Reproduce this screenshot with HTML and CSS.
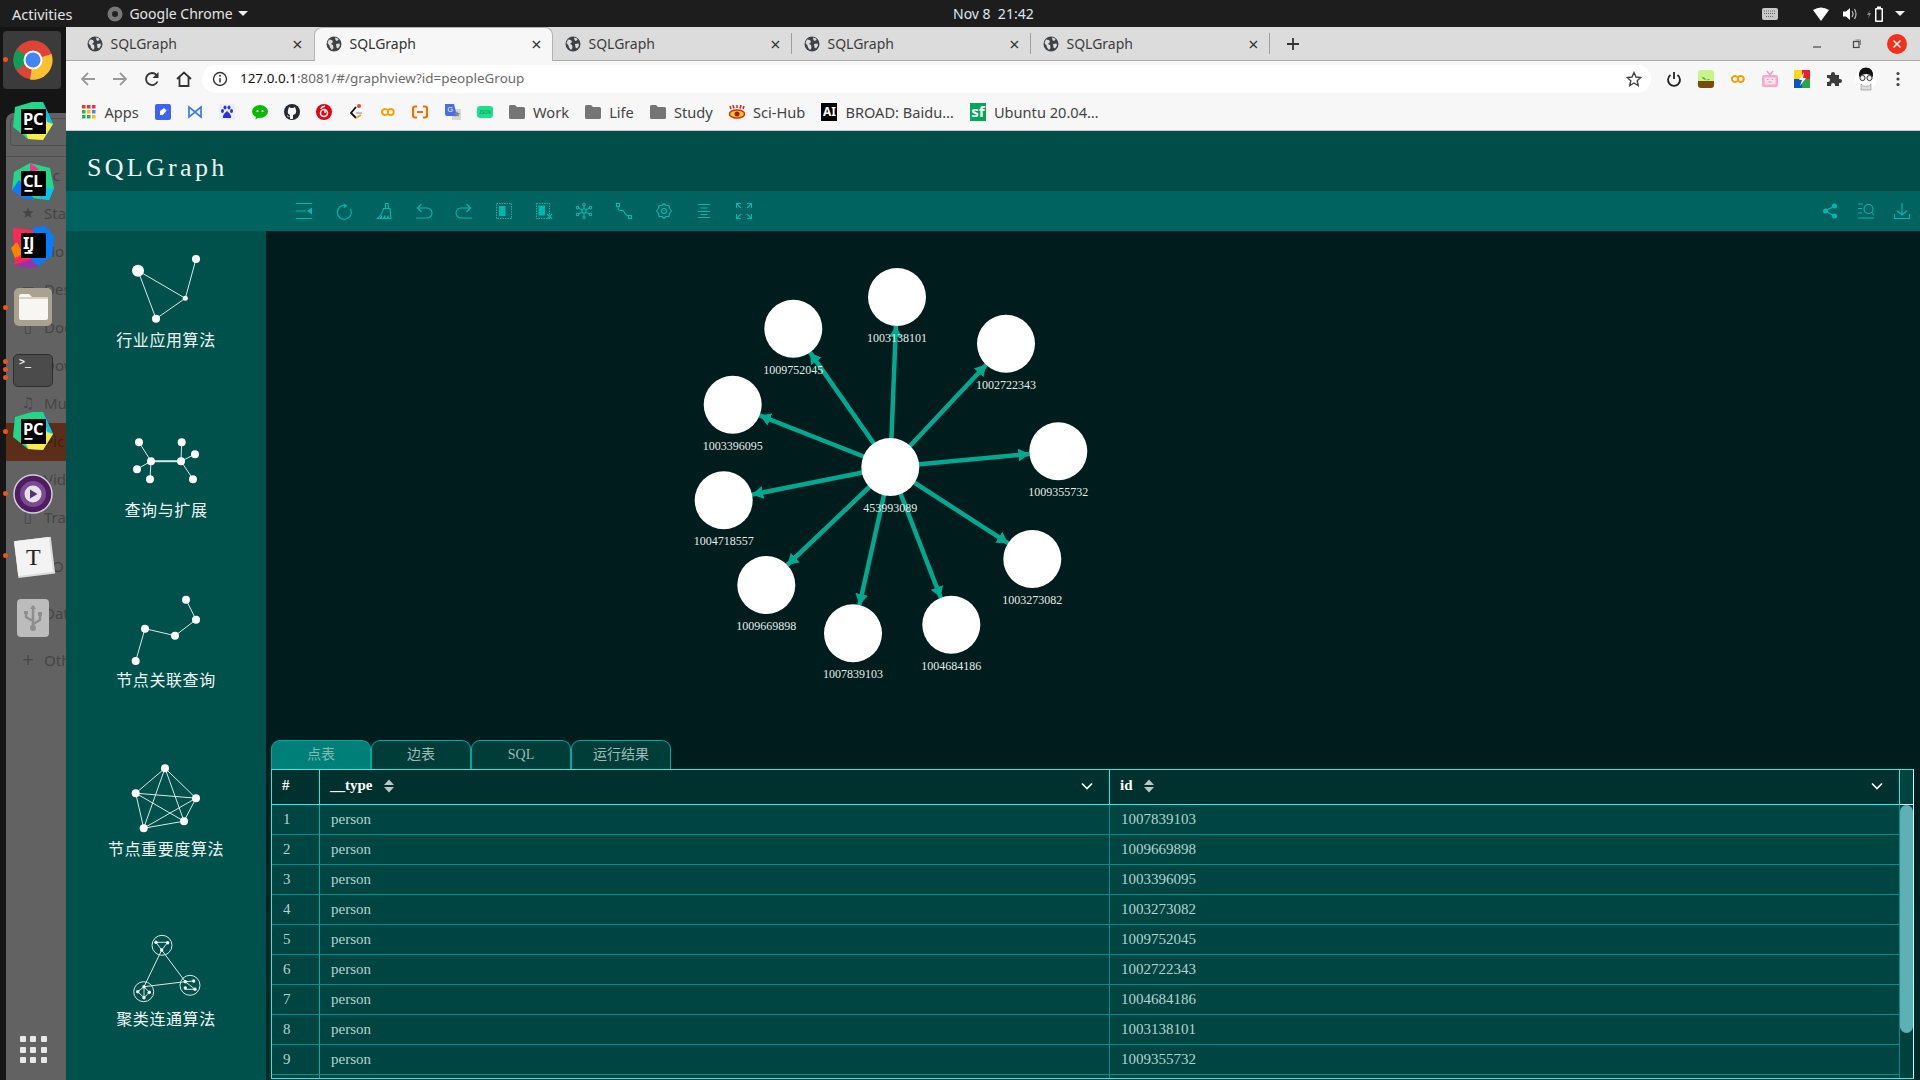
FILE: index.html
```html
<!DOCTYPE html>
<html lang="en">
<head>
<meta charset="utf-8">
<title>SQLGraph</title>
<link rel="stylesheet" href="styles.css">
</head>
<body>
<svg class="defs" width="0" height="0" aria-hidden="true">
  <symbol id="globe" viewBox="0 0 16 16">
    <circle cx="8" cy="8" r="7.5" fill="#3f4245"/>
    <path d="M3 3.5l3 .5 1 2-2 2 2 1 .5 3-1.5 2-2-2.500-.5-2L1.500 7zM9 1.500l3 1 .5 1.500-2 1-1-1zM10 8l3.500-.5.5 2-2 3-1.500-1z" fill="#dcdcdc"/>
  </symbol>
  <symbol id="jb" viewBox="0 0 48 48">
    <rect x="12" y="11" width="25" height="25" fill="#000"/>
    <rect x="15.500" y="30" width="8" height="1.800" fill="#fff"/>
  </symbol>
  <symbol id="co" viewBox="0 0 16 16">
    <circle cx="8" cy="8" r="8" fill="#fff"/>
    <path d="M7.300 6.200A3 3 0 1 0 7.300 9.800" fill="none" stroke="#ff9d00" stroke-width="2"/>
    <circle cx="10.800" cy="8" r="2.900" fill="none" stroke="#ff9d00" stroke-width="2"/>
  </symbol>
  <symbol id="folder" viewBox="0 0 16 14">
    <path d="M0 1.500A1.500 1.500 0 0 1 1.500 0H6l2 2h6.500A1.500 1.500 0 0 1 16 3.500v9a1.500 1.500 0 0 1-1.500 1.500h-13A1.500 1.500 0 0 1 0 12.500z" fill="#757575"/>
  </symbol>
</svg>

<header class="topbar">
  <div class="top-left">
    <span class="activities">Activities</span>
    <svg class="top-chrome" width="16" height="16" viewBox="0 0 16 16"><circle cx="8" cy="8" r="7.500" fill="#777"/><circle cx="8" cy="8" r="3" fill="#222"/></svg>
    <span>Google Chrome</span>
    <i class="caret"></i>
  </div>
  <span class="clock">Nov 8&nbsp;&nbsp;21:42</span>
  <div class="tray">
    <svg class="tray-kbd" width="16" height="12" viewBox="0 0 16 12"><rect width="16" height="12" rx="2" fill="#c8c8c8"/><path d="M2 3h12M2 5.500h12M4 8.500h8" stroke="#666" stroke-dasharray="1 1"/></svg>
    <svg class="tray-wifi" width="16" height="14" viewBox="0 0 16 14"><path d="M0 3Q8-2 16 3L8 14z" fill="#fff"/></svg>
    <svg class="tray-vol" width="16" height="14" viewBox="0 0 16 14"><path d="M1 4.500h3L8 1v12L4 9.500H1z" fill="#fff"/><path d="M10 4q2 3 0 6M12.500 2q3 5 0 10" stroke="#bbb" fill="none" stroke-width="1.200"/></svg>
    <svg class="tray-bat" width="18" height="18" viewBox="0 0 18 18"><path d="M3 5L0 10h2l-1 4 3-6H2z" fill="#888"/><rect x="8" y="3" width="8" height="14" rx="1" fill="#fff"/><rect x="9.500" y="4.500" width="5" height="11" fill="#1d1d1d"/><rect x="10" y="1.500" width="4" height="2" fill="#fff"/></svg>
    <i class="caret tray-caret"></i>
  </div>
</header>

<div class="desktop">
  <aside class="dock">
    <div class="ghost">
      <div class="ghost-nav"><span class="ghost-navbox"></span></div>
      <div class="ghost-row">ec</div>
      <div class="ghost-row"><b>★</b>Sta</div>
      <div class="ghost-row"><b>⌂</b>Ho</div>
      <div class="ghost-row"><b>▭</b>Des</div>
      <div class="ghost-row"><b>▯</b>Doc</div>
      <div class="ghost-row">Dow</div>
      <div class="ghost-row"><b>♫</b>Mu</div>
      <div class="ghost-row ghost-active">Pic</div>
      <div class="ghost-row"><b>▭</b>Vid</div>
      <div class="ghost-row"><b>▯</b>Tra</div>
      <div class="ghost-row ghost-wide">TO</div>
      <div class="ghost-row ghost-wide">Dat</div>
      <div class="ghost-row ghost-wide"><b>+</b>Oth</div>
    </div>
    <div class="dock-item dock-tile">
      <i class="run run-one"></i>
      <svg width="40" height="40" viewBox="0 0 40 40"><circle cx="20" cy="20" r="19.500" fill="#db4437"/><path d="M20 20L3 30A19.500 19.500 0 0 1 3.500 9.500z" fill="#0f9d58"/><path d="M20 20L38.500 14A19.500 19.500 0 0 1 17 39.500z" fill="#fbc02d"/><circle cx="20" cy="20" r="9.500" fill="#fff"/><circle cx="20" cy="20" r="7.500" fill="#4285f4"/></svg>
    </div>
    <div class="dock-item">
      <span class="jb"><svg width="48" height="48" viewBox="0 0 48 48"><path d="M6 9L23 4l11 0 10 22-10 16-15-1L4 29z" fill="#21d789"/><path d="M19 41l-3-8 18-17 10 10-10 16z" fill="#f5ea4a"/><path d="M34 4l10 22-6-2z" fill="#07c3f2"/><use href="#jb"/></svg><em>PC</em></span>
    </div>
    <div class="dock-item">
      <span class="jb"><svg width="48" height="48" viewBox="0 0 48 48"><path d="M5 12l16-9 20 5 4 20-5 12-18-2L3 30z" fill="#21d789"/><path d="M3 30l7-10 16 20-12-2z" fill="#087cfa"/><path d="M38 28l7 0-5 12-10-2z" fill="#07c3f2"/><path d="M21 3l9 6-9 4z" fill="#ff2d90"/><use href="#jb"/></svg><em>CL</em></span>
    </div>
    <div class="dock-item">
      <span class="jb"><svg width="48" height="48" viewBox="0 0 48 48"><path d="M24 6l12-2 9 10-2 20-14 10-8-6z" fill="#087cfa"/><path d="M4 6l20 2-2 30-8 2-8 4z" fill="#fe2857"/><path d="M2 26l6-6 6 12-8 4z" fill="#ff8100"/><path d="M5 43l17-6 7 7-9 2z" fill="#9b2fae"/><use href="#jb"/></svg><em>IJ</em></span>
    </div>
    <div class="dock-item">
      <i class="run run-one"></i>
      <svg width="48" height="48" viewBox="0 0 48 48"><rect x="5" y="4" width="38" height="38" rx="5" fill="#a9a291"/><path d="M10 12a2 2 0 0 1 2-2h8l3 3h14a2 2 0 0 1 2 2v19a2 2 0 0 1-2 2H12a2 2 0 0 1-2-2z" fill="#f8f6f2"/><path d="M10 14h29" stroke="#d9d3c6" stroke-width="2"/></svg>
    </div>
    <div class="dock-item">
      <i class="run run-a"></i><i class="run run-one"></i><i class="run run-c"></i>
      <span class="terminal">&gt;_</span>
    </div>
    <div class="dock-item">
      <i class="run run-one"></i>
      <span class="jb"><svg width="48" height="48" viewBox="0 0 48 48"><path d="M6 9L23 4l11 0 10 22-10 16-15-1L4 29z" fill="#21d789"/><path d="M19 41l-3-8 18-17 10 10-10 16z" fill="#f5ea4a"/><path d="M34 4l10 22-6-2z" fill="#07c3f2"/><use href="#jb"/></svg><em>PC</em></span>
    </div>
    <div class="dock-item">
      <i class="run run-one"></i>
      <svg width="40" height="40" viewBox="0 0 40 40"><circle cx="20" cy="20" r="19" fill="#4e1d60" stroke="#d6cdd9" stroke-width="1.500"/><circle cx="20" cy="20" r="13" fill="#7b4a90"/><circle cx="20" cy="20" r="8.500" fill="#e7e2e9"/><path d="M17 15.500l7.500 4.500-7.500 4.500z" fill="#5b3070"/></svg>
    </div>
    <div class="dock-item">
      <i class="run run-one"></i>
      <span class="text-app"><span>T</span></span>
    </div>
    <div class="dock-item">
      <svg width="32" height="38" viewBox="0 0 32 38"><rect width="32" height="38" rx="4" fill="#bcbcbc"/><path d="M16 7v22M16 22l-7-4v-4M16 25l7-4v-4" stroke="#8e8e8e" stroke-width="2.500" fill="none"/><path d="M13 10l3-4 3 4zM7 12h4v3H7zM21 13h4v4h-4z" fill="#8e8e8e"/><circle cx="16" cy="29" r="3" fill="#8e8e8e"/></svg>
    </div>
    <div class="dock-apps">
      <i></i><i></i><i></i><i></i><i></i><i></i><i></i><i></i><i></i>
    </div>
  </aside>

  <main class="browser">
    <div class="tabstrip">
      <div class="tab"><svg class="fav"><use href="#globe"/></svg><span class="tab-title">SQLGraph</span><span class="tab-x">×</span></div>
      <div class="tab tab-active"><svg class="fav"><use href="#globe"/></svg><span class="tab-title">SQLGraph</span><span class="tab-x">×</span></div>
      <div class="tab tab-sep"><svg class="fav"><use href="#globe"/></svg><span class="tab-title">SQLGraph</span><span class="tab-x">×</span></div>
      <div class="tab tab-sep"><svg class="fav"><use href="#globe"/></svg><span class="tab-title">SQLGraph</span><span class="tab-x">×</span></div>
      <div class="tab tab-sep"><svg class="fav"><use href="#globe"/></svg><span class="tab-title">SQLGraph</span><span class="tab-x">×</span></div>
      <svg class="newtab" width="14" height="14" viewBox="0 0 14 14"><path d="M7 1v12M1 7h12" stroke="#333" stroke-width="1.800"/></svg>
      <div class="winctl">
        <span class="winbtn"><svg width="10" height="10" viewBox="0 0 10 10"><path d="M1 8h8" stroke="#444" stroke-width="1.200"/></svg></span>
        <span class="winbtn"><svg width="10" height="10" viewBox="0 0 10 10"><rect x="1.500" y="2.500" width="5.500" height="6" fill="none" stroke="#444" stroke-width="1.200"/><path d="M3.500 1h5v5" fill="none" stroke="#888"/></svg></span>
        <span class="winbtn"><svg width="20" height="24" viewBox="0 0 20 24"><ellipse cx="10" cy="12" rx="10" ry="10" fill="#f4301b"/><path d="M6.500 8.500l7 7M13.500 8.500l-7 7" stroke="#fff" stroke-width="1.500"/></svg></span>
      </div>
    </div>

    <div class="addressbar">
      <span class="navbtn"><svg width="16" height="16" viewBox="0 0 16 16"><path d="M15 8H2M8 2L2 8l6 6" fill="none" stroke="#9a9a9a" stroke-width="1.800"/></svg></span>
      <span class="navbtn"><svg width="16" height="16" viewBox="0 0 16 16"><path d="M1 8h13M8 2l6 6-6 6" fill="none" stroke="#9a9a9a" stroke-width="1.800"/></svg></span>
      <span class="navbtn"><svg width="16" height="16" viewBox="0 0 16 16"><path d="M13.500 10.500A6 6 0 1 1 12.500 4" fill="none" stroke="#333" stroke-width="1.800"/><path d="M14.500 1v6h-6z" fill="#333"/></svg></span>
      <span class="navbtn"><svg width="16" height="16" viewBox="0 0 16 16"><path d="M1 8l7-6.500L15 8M3.500 6.500V15h9V6.500" fill="none" stroke="#333" stroke-width="1.800"/></svg></span>
      <div class="omnibox">
        <svg width="16" height="16" viewBox="0 0 16 16"><circle cx="8" cy="8" r="6.500" fill="none" stroke="#333" stroke-width="1.400"/><path d="M8 7v4.500" stroke="#333" stroke-width="1.500"/><circle cx="8" cy="4.800" r="1" fill="#333"/></svg>
        <span class="url"><span class="url-host">127.0.0.1</span>:8081/#/graphview?id=peopleGroup</span>
        <svg class="star" width="16" height="16" viewBox="0 0 16 16"><path d="M8 1.500l2 4.500 4.800.5-3.600 3.200 1 4.800L8 12l-4.200 2.500 1-4.800L1.200 6.500 6 6z" fill="none" stroke="#444" stroke-width="1.400"/></svg>
      </div>
      <div class="extensions">
        <span class="navbtn"><svg width="16" height="16" viewBox="0 0 16 16"><path d="M4.500 4a6 6 0 1 0 7 0" fill="none" stroke="#222" stroke-width="1.800"/><path d="M8 1v7" stroke="#222" stroke-width="1.800"/></svg></span>
        <span class="navbtn"><svg width="16" height="18" viewBox="0 0 16 18"><rect width="16" height="18" rx="3" fill="#c6f58b"/><path d="M0 11h16v4a3 3 0 0 1-3 3H3a3 3 0 0 1-3-3z" fill="#7a4a12"/><path d="M8 10Q4 9 4 7q3 0 4 3 2-1 4-1-1 2-4 1" fill="#4caf20"/></svg></span>
        <span class="navbtn"><svg width="16" height="16"><use href="#co"/></svg></span>
        <span class="navbtn"><svg width="16" height="18" viewBox="0 0 16 18"><path d="M5 1l3 4 3-4" fill="none" stroke="#f49ac1" stroke-width="1.400"/><rect y="5" width="16" height="12" rx="2" fill="#f9a8cb"/><rect x="2.500" y="7.500" width="11" height="7" fill="#fde4ef"/><path d="M5 9.500h1.500M9.500 9.500H11M6.500 12h3" stroke="#f080b0" stroke-width="1.200"/></svg></span>
        <span class="navbtn"><svg width="16" height="18" viewBox="0 0 16 18"><rect width="8" height="9" fill="#fbd915"/><rect x="8" width="8" height="9" fill="#ee1d36"/><rect y="9" width="8" height="9" fill="#0b57c1"/><rect x="8" y="9" width="8" height="9" fill="#24a84a"/><path d="M10 2L5 10h3l-2 6 6-8H9z" fill="#fff"/></svg></span>
        <span class="navbtn"><svg width="16" height="16" viewBox="0 0 16 16"><path d="M1 4h4V3a2 2 0 0 1 4 0v1h4v4h1a2 2 0 0 1 0 4h-1v3H9v-1a1.800 1.800 0 0 0-4 0v1H1v-4h1a2 2 0 0 0 0-4H1z" fill="#3c3c3c"/></svg></span>
        <span class="navbtn"><svg width="22" height="26" viewBox="0 0 22 26"><circle cx="11" cy="13" r="11" fill="#fff"/><path d="M4 11Q3 2 11 1.500 19 2 18 11q-3-3-7-3t-7 3z" fill="#111"/><circle cx="7.500" cy="12" r="2.600" fill="#eee" stroke="#333"/><circle cx="14.500" cy="12" r="2.600" fill="#eee" stroke="#333"/><path d="M6 18q5 5 10 0v6H6z" fill="#ddd" stroke="#888" stroke-width=".6"/></svg></span>
        <span class="navbtn"><svg width="4" height="16" viewBox="0 0 4 16"><circle cx="2" cy="2.500" r="1.600" fill="#444"/><circle cx="2" cy="8" r="1.600" fill="#444"/><circle cx="2" cy="13.500" r="1.600" fill="#444"/></svg></span>
      </div>
    </div>

    <nav class="bookmarks">
      <span class="bm bm-apps"><svg width="14" height="14" viewBox="0 0 14 14"><g><rect width="3.500" height="3.500" fill="#e53935"/><rect x="5" width="3.500" height="3.500" fill="#e53935"/><rect x="10" width="3.500" height="3.500" fill="#e53935"/><rect y="5" width="3.500" height="3.500" fill="#34a853"/><rect x="5" y="5" width="3.500" height="3.500" fill="#fbbc04"/><rect x="10" y="5" width="3.500" height="3.500" fill="#4285f4"/><rect y="10" width="3.500" height="3.500" fill="#34a853"/><rect x="5" y="10" width="3.500" height="3.500" fill="#34a853"/><rect x="10" y="10" width="3.500" height="3.500" fill="#fbbc04"/></g></svg><span>Apps</span></span>
      <span class="bm"><svg width="16" height="16" viewBox="0 0 16 16"><rect width="16" height="16" rx="2" fill="#3d63f5"/><path d="M5 11V7l4-3 2.500 2.500L8 11z" fill="#fff"/></svg></span>
      <span class="bm"><svg width="16" height="16" viewBox="0 0 16 16"><path d="M2 3v10l6-5 6 5V3L8 8z" fill="none" stroke="#3a78f2" stroke-width="1.700"/></svg></span>
      <span class="bm"><svg width="16" height="16" viewBox="0 0 16 16"><rect width="16" height="16" fill="#eef1fd"/><ellipse cx="3.500" cy="7" rx="1.500" ry="2" fill="#2932e1"/><ellipse cx="12.500" cy="7" rx="1.500" ry="2" fill="#2932e1"/><ellipse cx="6" cy="3.500" rx="1.500" ry="2" fill="#2932e1"/><ellipse cx="10" cy="3.500" rx="1.500" ry="2" fill="#2932e1"/><path d="M8 7q-5 4-4 7h8q1-3-4-7z" fill="#2932e1"/></svg></span>
      <span class="bm"><svg width="16" height="16" viewBox="0 0 16 16"><ellipse cx="8" cy="7.500" rx="8" ry="6.500" fill="#09bb07"/><path d="M4 12l-.5 3.500L7 13z" fill="#09bb07"/><circle cx="5.500" cy="7" r="1" fill="#fff"/><circle cx="10.500" cy="7" r="1" fill="#fff"/></svg></span>
      <span class="bm"><svg width="16" height="16" viewBox="0 0 16 16"><circle cx="8" cy="8" r="8" fill="#24292e"/><path d="M4 6l1-3 2 1h2l2-1 1 3q1 4-3 5v4H6v-2H5q-2 0-2-2 1 0 1.500 1.500H6V11Q3 10 4 6z" fill="#f7f7f7"/></svg></span>
      <span class="bm"><svg width="16" height="16" viewBox="0 0 16 16"><circle cx="8" cy="8" r="8" fill="#e60012"/><circle cx="8" cy="9" r="3.500" fill="none" stroke="#fff" stroke-width="1.500"/><path d="M9 2Q5 3 5 5M9 5v4" stroke="#fff" stroke-width="1.500" fill="none"/></svg></span>
      <span class="bm"><svg width="16" height="16" viewBox="0 0 16 16"><path d="M8 3L3 9l5 5" fill="none" stroke="#111" stroke-width="1.800"/><path d="M8 14l5-3" stroke="#f4a21f" stroke-width="1.800"/><path d="M8 9h6" stroke="#bbb" stroke-width="1.800"/><circle cx="11" cy="2" r="2" fill="#e8453c"/></svg></span>
      <span class="bm"><svg width="16" height="16"><use href="#co"/></svg></span>
      <span class="bm"><svg width="16" height="14" viewBox="0 0 16 14"><path d="M5 1.500H3a2 2 0 0 0-2 2v7a2 2 0 0 0 2 2h2M11 1.500h2a2 2 0 0 1 2 2v7a2 2 0 0 1-2 2h-2" fill="none" stroke="#ff6a00" stroke-width="2.200"/><path d="M5 7h6" stroke="#ff6a00" stroke-width="2"/></svg></span>
      <span class="bm"><svg width="16" height="16" viewBox="0 0 16 16"><rect x="7" y="5" width="9" height="11" fill="#d8d8d8"/><path d="M0 0h9l3 12H2a2 2 0 0 1-2-2z" fill="#4a6ee8"/><text x="2.500" y="8" font-size="7" fill="#fff" font-family="Liberation Sans">G</text><path d="M12 7l1 2 2 .3-1.500 1.500.4 2-1.900-1-1.900 1 .4-2L9 9.300l2-.3z" fill="#788"/></svg></span>
      <span class="bm"><svg width="16" height="12" viewBox="0 0 16 12"><rect width="16" height="12" rx="3" fill="#1ee08a"/><text x="8" y="8" text-anchor="middle" font-size="4.500" fill="#0d8f59" font-family="Liberation Sans">JSON</text></svg></span>
      <span class="bm"><svg width="16" height="14"><use href="#folder"/></svg><span>Work</span></span>
      <span class="bm"><svg width="16" height="14"><use href="#folder"/></svg><span>Life</span></span>
      <span class="bm"><svg width="16" height="14"><use href="#folder"/></svg><span>Study</span></span>
      <span class="bm"><svg width="16" height="14" viewBox="0 0 16 14"><ellipse cx="8" cy="9" rx="7.500" ry="4" fill="#ffd400" stroke="#e2231a" stroke-width="1.500"/><circle cx="8" cy="9" r="2.500" fill="#b01010"/><path d="M2 4L1 1M5 3.500L4 0M8 3V0M11 3.500L12 0M14 4l1-3" stroke="#e2231a" stroke-width="1.500"/></svg><span>Sci-Hub</span></span>
      <span class="bm"><span class="badge-ai">AI</span><span>BROAD: Baidu…</span></span>
      <span class="bm"><span class="badge-sf">sf</span><span>Ubuntu 20.04…</span></span>
    </nav>

    <div class="app">
      <h1 class="app-title">SQLGraph</h1>
      <div class="toolbar">
        <div class="tools">
          <span class="tool"><svg viewBox="0 0 16 16"><path d="M0 .5h16M0 8h10M0 15.500h16"/><path class="fill" d="M16 4.500L11 8l5 3.500z"/></svg></span>
          <span class="tool"><svg viewBox="0 0 16 16"><path d="M10 2.500A7 7 0 1 0 14.500 6"/><path class="fill" d="M7.500.5l4 2.200-3.500 2.300z"/></svg></span>
          <span class="tool"><svg viewBox="0 0 16 16"><path d="M9.500.5h2.500l.5 5h-3zM7.500 5.500h6.500l1 10h-2.500l-.5-3-.5 3h-2.500l-.2-3-.8 3H5l1-3-2 3H1.500Q6.500 11 7.500 5.500z"/></svg></span>
          <span class="tool"><svg viewBox="0 0 16 16"><path d="M5.500 1L1.500 5l4 4M1.500 5h9.500a4.500 4.500 0 0 1 0 10H0"/></svg></span>
          <span class="tool"><svg viewBox="0 0 16 16"><path d="M10.500 1l4 4-4 4M14.500 5H5a4.500 4.500 0 0 0 0 10h11" /></svg></span>
          <span class="tool"><svg viewBox="0 0 16 16"><rect class="dash" x=".5" y=".5" width="15" height="15"/><rect class="fill" x="3" y="3" width="6.500" height="10"/></svg></span>
          <span class="tool"><svg viewBox="0 0 16 16"><rect class="dash" x=".5" y=".5" width="13" height="15"/><rect class="fill" x="2.500" y="2.500" width="6.500" height="10"/><path d="M11 11l5 5M16 11l-5 5"/></svg></span>
          <span class="tool"><svg viewBox="0 0 16 16"><circle cx="8" cy="8" r="2"/><circle cx="8" cy="1.500" r="1.200"/><circle cx="8" cy="14.500" r="1.200"/><circle cx="1.500" cy="4.500" r="1.200"/><circle cx="14.500" cy="4.500" r="1.200"/><circle cx="1.500" cy="11.500" r="1.200"/><circle cx="14.500" cy="11.500" r="1.200"/><path d="M8 3v3M8 10v3M2.500 5l4 2M13.500 5l-4 2M2.500 11l4-2M13.500 11l-4-2"/></svg></span>
          <span class="tool"><svg viewBox="0 0 16 16"><rect x=".5" y=".5" width="3" height="3"/><rect x="12.500" y="12.500" width="3" height="3"/><path d="M2 3.500Q2 8 5 7.500t3.500 2 4 3.500"/></svg></span>
          <span class="tool"><svg viewBox="0 0 16 16"><path d="M8 .5l2 2h3l.5 3 2 2.500-2 2.500-.5 3h-3l-2 2-2-2H3l-.5-3L.5 8l2-2.500.5-3h3z" stroke-linejoin="round"/><circle cx="8" cy="8" r="2.500"/></svg></span>
          <span class="tool"><svg viewBox="0 0 16 16"><path d="M2 1.500h12M4.500 5h7M2 8.500h12M4.500 11.500h7M2 14.500h12"/></svg></span>
          <span class="tool"><svg viewBox="0 0 16 16"><path d="M.5 5V.5H5M.5.5L5 5M11 .5h4.500V5M15.500.5L11 5M.5 11v4.500H5M.5 15.500L5 11M15.500 11v4.500H11M15.500 15.500L11 11"/></svg></span>
        </div>
        <div class="tools-right">
          <span class="tool-r"><svg viewBox="0 0 16 16"><circle class="fill" cx="12.500" cy="3" r="2.500"/><circle class="fill" cx="3.500" cy="8" r="2.500"/><circle class="fill" cx="12.500" cy="13" r="2.500"/><path d="M12.500 3l-9 5 9 5"/></svg></span>
          <span class="tool-r"><svg viewBox="0 0 16 16"><path d="M0 1h5M0 5.500h4M0 10h4M0 15h16"/><circle cx="10.500" cy="6" r="4.500"/><path d="M14 9.500l2 2.500"/></svg></span>
          <span class="tool-r"><svg viewBox="0 0 16 16"><path d="M8 0v12M3 7.500L8 12l5-4.500M.5 11v4.500h15V11"/></svg></span>
        </div>
      </div>

      <div class="workspace">
        <aside class="sidebar">
          <div class="menu-item">
            <svg class="menu-icon" viewBox="126 250 80 78"><path class="ml" d="M138 270.700L185.300 298.300 156 318.700zM185.300 298.300L196 259"/><circle cx="138" cy="270.700" r="6"/><circle cx="196" cy="259" r="4"/><circle cx="185.300" cy="298.300" r="2.500"/><circle cx="156" cy="318.700" r="4"/></svg>
            <span class="menu-label">行业应用算法</span>
          </div>
          <div class="menu-item">
            <svg class="menu-icon" viewBox="126 419.500 80 78"><path class="ml" d="M139 441.700L151 460.700M137 468.700L151 460.700M150 478.700L151 460.700M181 460.700L181.700 441.700M181 460.700L195 453.700M181 460.700L193 478.700"/><path class="ml ml-thick" d="M151 460.700H181"/><circle cx="139" cy="441.700" r="4"/><circle cx="181.700" cy="441.700" r="4"/><circle cx="195" cy="453.700" r="4"/><circle cx="151" cy="460.700" r="4"/><circle cx="181" cy="460.700" r="4"/><circle cx="137" cy="468.700" r="4"/><circle cx="150" cy="478.700" r="4"/><circle cx="193" cy="478.700" r="4"/></svg>
            <span class="menu-label">查询与扩展</span>
          </div>
          <div class="menu-item">
            <svg class="menu-icon" viewBox="126 589 80 78"><path class="ml" d="M186 598.700L196 618.700 175 634.700 145 627.700 135.700 660"/><circle cx="186" cy="598.700" r="4"/><circle cx="196" cy="618.700" r="4"/><circle cx="175" cy="634.700" r="4"/><circle cx="145" cy="627.700" r="4"/><circle cx="135.700" cy="660" r="4"/></svg>
            <span class="menu-label">节点关联查询</span>
          </div>
          <div class="menu-item">
            <svg class="menu-icon" viewBox="126 758.500 80 78"><path class="ml" d="M165 767.700L135.700 792.700M165 767.700L196 797.700M165 767.700L184 820.700M165 767.700L143.700 827.700M135.700 792.700L196 797.700M135.700 792.700L184 820.700M135.700 792.700L143.700 827.700M196 797.700L184 820.700M196 797.700L143.700 827.700M184 820.700L143.700 827.700"/><circle cx="165" cy="767.700" r="4"/><circle cx="135.700" cy="792.700" r="4"/><circle cx="196" cy="797.700" r="4"/><circle cx="184" cy="820.700" r="4"/><circle cx="143.700" cy="827.700" r="4"/></svg>
            <span class="menu-label">节点重要度算法</span>
          </div>
          <div class="menu-item">
            <svg class="menu-icon" viewBox="126 928 80 78"><path class="ml" d="M161.700 949L144 985.700 185.300 980.700zM156 941.300H167.700L161.700 949zM144 985.700L137.700 990.700 144 996.700 149.300 991.300zM144 985.700V996.700M185.300 980.700L193.700 980M185.300 980.700L195 988.300H185.300"/><circle class="mr" cx="162" cy="944.300" r="10"/><circle class="mr" cx="143.700" cy="990.700" r="10"/><circle class="mr" cx="190" cy="984.300" r="10"/><circle cx="156" cy="941.300" r="1.700"/><circle cx="167.700" cy="941.700" r="1.700"/><circle cx="161.700" cy="949" r="1.700"/><circle cx="144" cy="985.700" r="1.700"/><circle cx="137.700" cy="990.700" r="1.700"/><circle cx="149.300" cy="991.300" r="1.700"/><circle cx="144" cy="996.700" r="1.700"/><circle cx="185.300" cy="980.700" r="1.700"/><circle cx="193.700" cy="980" r="1.700"/><circle cx="185.300" cy="987" r="1.700"/><circle cx="195" cy="988.300" r="1.700"/></svg>
            <span class="menu-label">聚类连通算法</span>
          </div>
        </aside>

        <section class="content">
          <svg class="graph" viewBox="266 231 1654 509">
            <defs>
              <marker id="arrow" markerUnits="userSpaceOnUse" markerWidth="14" markerHeight="14" refX="11" refY="7" orient="auto"><path d="M0 .5L11 7 0 13.500z" fill="#00a98f"/></marker>
            </defs>
            <g class="edges">
              <line x1="890.300" y1="467" x2="895.900" y2="326" marker-end="url(#arrow)"/>
              <line x1="890.300" y1="467" x2="810" y2="352.400" marker-end="url(#arrow)"/>
              <line x1="890.300" y1="467" x2="986.200" y2="364.800" marker-end="url(#arrow)"/>
              <line x1="890.300" y1="467" x2="759.700" y2="415.400" marker-end="url(#arrow)"/>
              <line x1="890.300" y1="467" x2="1029.400" y2="454" marker-end="url(#arrow)"/>
              <line x1="890.300" y1="467" x2="752.100" y2="494.600" marker-end="url(#arrow)"/>
              <line x1="890.300" y1="467" x2="1008" y2="543.200" marker-end="url(#arrow)"/>
              <line x1="890.300" y1="467" x2="787.300" y2="565" marker-end="url(#arrow)"/>
              <line x1="890.300" y1="467" x2="940.800" y2="597.700" marker-end="url(#arrow)"/>
              <line x1="890.300" y1="467" x2="859.400" y2="605" marker-end="url(#arrow)"/>
            </g>
            <g class="nodes">
              <circle cx="890.300" cy="467" r="29"/>
              <circle cx="897" cy="297" r="29"/>
              <circle cx="793.300" cy="328.700" r="29"/>
              <circle cx="1006" cy="343.700" r="29"/>
              <circle cx="732.700" cy="404.700" r="29"/>
              <circle cx="1058.300" cy="451.300" r="29"/>
              <circle cx="723.700" cy="500.300" r="29"/>
              <circle cx="1032.300" cy="559" r="29"/>
              <circle cx="766.300" cy="585" r="29"/>
              <circle cx="951.300" cy="624.700" r="29"/>
              <circle cx="853" cy="633.300" r="29"/>
            </g>
            <g class="labels">
              <text x="890.300" y="512">453993089</text>
              <text x="897" y="342">1003138101</text>
              <text x="793.300" y="374">1009752045</text>
              <text x="1006" y="389">1002722343</text>
              <text x="732.700" y="450">1003396095</text>
              <text x="1058.300" y="496">1009355732</text>
              <text x="723.700" y="545">1004718557</text>
              <text x="1032.300" y="604">1003273082</text>
              <text x="766.300" y="630">1009669898</text>
              <text x="951.300" y="670">1004684186</text>
              <text x="853" y="678">1007839103</text>
            </g>
          </svg>

          <div class="panel">
            <div class="panel-tabs">
              <span class="ptab ptab-active">点表</span>
              <span class="ptab">边表</span>
              <span class="ptab">SQL</span>
              <span class="ptab">运行结果</span>
            </div>
            <div class="grid-wrap">
              <div class="grid-scroll">
                <table class="grid">
                  <colgroup><col class="c-idx"><col class="c-data"><col class="c-data"></colgroup>
                  <thead>
                    <tr>
                      <th>#</th>
                      <th><div class="th-in"><span>__type</span><svg class="sort" width="10" height="14" viewBox="0 0 10 14"><path d="M5 .5l5 5.500H0zM5 13.500L0 8h10z"/></svg><svg class="chev" width="12" height="8" viewBox="0 0 12 8"><path d="M1 1.500l5 5 5-5"/></svg></div></th>
                      <th><div class="th-in"><span>id</span><svg class="sort" width="10" height="14" viewBox="0 0 10 14"><path d="M5 .5l5 5.500H0zM5 13.500L0 8h10z"/></svg><svg class="chev" width="12" height="8" viewBox="0 0 12 8"><path d="M1 1.500l5 5 5-5"/></svg></div></th>
                    </tr>
                  </thead>
                  <tbody>
                    <tr><td>1</td><td>person</td><td>1007839103</td></tr>
                    <tr><td>2</td><td>person</td><td>1009669898</td></tr>
                    <tr><td>3</td><td>person</td><td>1003396095</td></tr>
                    <tr><td>4</td><td>person</td><td>1003273082</td></tr>
                    <tr><td>5</td><td>person</td><td>1009752045</td></tr>
                    <tr><td>6</td><td>person</td><td>1002722343</td></tr>
                    <tr><td>7</td><td>person</td><td>1004684186</td></tr>
                    <tr><td>8</td><td>person</td><td>1003138101</td></tr>
                    <tr><td>9</td><td>person</td><td>1009355732</td></tr>
                    <tr class="row-clipped"><td></td><td></td><td></td></tr>
                  </tbody>
                </table>
              </div>
              <div class="sb">
                <div class="sb-head"></div>
                <div class="sb-track"><div class="sb-thumb"></div></div>
              </div>
            </div>
          </div>
        </section>
      </div>
    </div>
  </main>
</div>
</body>
</html>
```

FILE: styles.css
```css
* { box-sizing: border-box; }
html, body { margin: 0; height: 100%; overflow: hidden; }
body {
  display: flex;
  flex-direction: column;
  width: 1920px;
  height: 1080px;
  font-family: "Noto Sans", "Noto Sans CJK SC", sans-serif;
  background: #151515;
}
.defs { position: absolute; }

/* GNOME top bar */
.topbar {
  flex: none;
  height: 27px;
  display: flex;
  align-items: center;
  background: #1d1d1d;
  color: #e4e4e4;
  font-size: 14px;
}
.top-left { width: 953px; display: flex; align-items: center; padding-left: 12px; }
.activities { margin-right: 35px; font-size: 14.500px; }
.top-chrome { margin-right: 6px; }
.caret {
  display: inline-block;
  width: 0;
  height: 0;
  margin-left: 5px;
  border-left: 5px solid transparent;
  border-right: 5px solid transparent;
  border-top: 5px solid #eee;
}
.clock { color: #dfe7ee; }
.tray { margin-left: auto; display: flex; align-items: center; }
.tray-kbd { margin-right: 35px; }
.tray-wifi { margin-right: 12.500px; }
.tray-vol { margin-right: 9.500px; }
.tray-bat { margin-right: 10px; }
.tray-caret { margin: 0 15px 0 0; }

.desktop { flex: 1; min-height: 0; display: flex; }

/* Dock */
.dock {
  position: relative;
  flex: none;
  width: 66px;
  display: flex;
  flex-direction: column;
  align-items: center;
  padding-top: 2px;
  overflow: hidden;
  background: #151515;
}
.ghost {
  position: absolute;
  left: 6px;
  right: 0;
  top: 86px;
  bottom: 0;
  background: #626262;
  border-top-left-radius: 8px;
  overflow: hidden;
  white-space: nowrap;
  color: #454545;
  font-size: 15px;
}
.ghost-nav {
  height: 44px;
  padding: 5px 0 0 4px;
  border-bottom: 1px solid #505050;
}
.ghost-navbox {
  display: block;
  height: 28px;
  border: 1px solid #505050;
  border-right: 0;
  border-radius: 4px 0 0 4px;
}
.ghost-row {
  position: relative;
  height: 38px;
  line-height: 36px;
  padding-left: 38px;
}
.ghost-row b {
  position: absolute;
  left: 12px;
  width: 20px;
  text-align: center;
  font-weight: 400;
  font-family: "DejaVu Sans", sans-serif;
}
.ghost-wide { height: 47px; line-height: 58px; }
.ghost-active { background: #5c2d18; color: #3a2013; }
.dock-item {
  position: relative;
  flex: none;
  width: 60px;
  height: 62px;
  display: flex;
  align-items: center;
  justify-content: center;
}
.dock-tile::before {
  content: "";
  position: absolute;
  left: 0;
  right: 2px;
  top: 2px;
  bottom: 2px;
  background: #3b3b3b;
  border-radius: 4px;
}
.dock-tile svg { position: relative; }
.run {
  position: absolute;
  left: 0;
  width: 5px;
  height: 5px;
  border-radius: 50%;
  background: #e95420;
  z-index: 2;
}
.run-one { top: 28px; }
.run-a { top: 20px; }
.run-c { top: 36px; }
.jb { position: relative; display: block; width: 48px; height: 48px; }
.jb svg { display: block; }
.jb em {
  position: absolute;
  left: 14px;
  top: 11px;
  color: #fff;
  font: 700 16.500px/19px "Noto Sans", sans-serif;
  font-style: normal;
  letter-spacing: -.3px;
}
.terminal {
  width: 40px;
  height: 33px;
  padding-left: 5px;
  border: 1px solid #2e2e2e;
  border-radius: 5px;
  background: #4b4b4b;
  color: #e6e6e6;
  font: 700 10px/14px "DejaVu Sans Mono", monospace;
}
.text-app {
  display: flex;
  align-items: center;
  justify-content: center;
  width: 35px;
  height: 35px;
  background: #f3f3f3;
  box-shadow: 1px 1px 0 1px #dcdcdc;
  transform: rotate(-7deg);
  color: #222;
  font: 24px/1 "Liberation Serif", serif;
}
.text-app span { transform: rotate(7deg); }
.dock-apps {
  position: relative;
  margin-top: auto;
  margin-bottom: 17px;
  display: grid;
  grid-template-columns: repeat(3, 6px);
  gap: 4.500px;
  justify-content: center;
}
.dock-apps i { width: 6px; height: 6px; border-radius: 1px; background: #e8e8e8; }

/* Browser chrome */
.browser { flex: 1; min-width: 0; display: flex; flex-direction: column; }
.tabstrip {
  flex: none;
  height: 34px;
  padding-left: 8.500px;
  display: flex;
  align-items: stretch;
  background: #dcdcdc;
  border-bottom: 1px solid #a9a9a9;
  color: #3c3c3c;
  font-size: 14px;
}
.tab {
  width: 239px;
  padding: 0 8px 0 12px;
  display: flex;
  align-items: center;
  gap: 8px;
  position: relative;
}
.tab-active {
  margin-bottom: -1px;
  background: #f7f7f7;
  border: 1px solid #b4b4b4;
  border-bottom: 0;
  border-radius: 8px 8px 0 0;
  padding: 0 7px 2px 11px;
  color: #333;
}
.tab-sep::after {
  content: "";
  position: absolute;
  right: 0;
  top: 6px;
  bottom: 6px;
  width: 1px;
  background: #9e9e9e;
}
.fav { width: 16px; height: 16px; flex: none; }
.tab-title { flex: 1; }
.tab-x { width: 16px; text-align: center; font-size: 18px; line-height: 16px; color: #333; }
.newtab { align-self: center; margin-left: 16px; }
.winctl { margin-left: auto; display: flex; padding-right: 3px; }
.winbtn { width: 40px; display: flex; align-items: center; justify-content: center; }

.addressbar {
  flex: none;
  height: 32px;
  padding: 4px 6px 0;
  display: flex;
  align-items: center;
  background: #f7f7f7;
}
.navbtn { flex: none; width: 32px; height: 28px; display: flex; align-items: center; justify-content: center; }
.omnibox {
  flex: 1;
  height: 28px;
  margin: 0 7px 0 2px;
  padding: 0 9px 0 10px;
  display: flex;
  align-items: center;
  gap: 12px;
  background: #fff;
  border-radius: 14px;
}
.url { flex: 1; margin-top: -2px; font-size: 13.450px; color: #6a6a6a; }
.url-host { color: #111; }
.extensions { display: flex; }

.bookmarks {
  flex: none;
  height: 38px;
  padding: 0 0 0 15.500px;
  display: flex;
  align-items: center;
  gap: 16.200px;
  background: #f7f7f7;
  border-bottom: 1px solid #c9c9c9;
  color: #444;
  font-size: 14.600px;
  white-space: nowrap;
}
.bm { display: flex; align-items: center; gap: 8px; min-width: 16px; justify-content: center; }
.bm-apps { gap: 9px; }
.badge-ai, .badge-sf {
  width: 16px;
  height: 18px;
  display: flex;
  align-items: center;
  justify-content: center;
  font: 700 12px/1 "Noto Sans", sans-serif;
}
.badge-ai { background: #000; color: #fff; }
.badge-sf { background: #00a65c; color: #fff; font-size: 15px; }

/* App */
.app { flex: 1; min-height: 0; display: flex; flex-direction: column; }
.app-title {
  flex: none;
  height: 60px;
  margin: 0;
  padding: 14px 0 0 21px;
  background: #004d4a;
  color: #edf5f4;
  font: 400 26px/46px "Liberation Serif", serif;
  letter-spacing: 3.300px;
}
.toolbar { flex: none; height: 40px; display: flex; align-items: center; background: #006360; }
.tools { display: flex; padding-left: 218px; }
.tools-right { margin-left: auto; display: flex; }
.tool { width: 40px; height: 40px; display: flex; align-items: center; justify-content: center; }
.tool-r { width: 36px; height: 40px; display: flex; align-items: center; justify-content: center; }
.tool svg, .tool-r svg {
  width: 16px;
  height: 16px;
  fill: none;
  stroke: #00b8b0;
  stroke-width: 1.100;
  overflow: visible;
}
.toolbar .fill { fill: #00b8b0; stroke: none; }
.toolbar .dash { stroke-dasharray: 1.500 1; }

.workspace { flex: 1; min-height: 0; display: flex; }
.sidebar {
  flex: none;
  width: 200px;
  padding-top: 19px;
  display: flex;
  flex-direction: column;
  gap: 67.800px;
  background: #00504c;
}
.menu-item { display: flex; flex-direction: column; align-items: center; }
.menu-icon { display: block; width: 80px; height: 78px; fill: #fff; }
.ml { fill: none; stroke: #dbe9e7; stroke-width: 1; }
.ml-thick { stroke-width: 2; }
.mr { fill: none; stroke: #dbe9e7; stroke-width: 1; }
.menu-label {
  height: 24px;
  margin-top: -1px;
  margin-bottom: 1px;
  line-height: 24px;
  color: #eef6f5;
  font-family: "Noto Sans CJK SC", sans-serif;
  font-size: 16px;
  letter-spacing: .6px;
}

.content { flex: 1; min-width: 0; display: flex; flex-direction: column; background: #001c1c; }
.graph { flex: none; display: block; width: 1654px; height: 509px; }
.edges line { stroke: #00a98f; stroke-width: 4.500; }
.nodes circle { fill: #fff; }
.labels text {
  fill: #e4ece9;
  font: 12px "Liberation Serif", serif;
  text-anchor: middle;
}

.panel {
  flex: 1;
  min-height: 0;
  display: flex;
  flex-direction: column;
  padding: 0 6px 1px 5px;
  background: linear-gradient(#001c1c, #002b28);
}
.panel-tabs { flex: none; height: 29px; display: flex; }
.ptab {
  width: 100px;
  border: 1px solid #00a8a0;
  border-bottom: 0;
  border-radius: 9px 9px 0 0;
  background: #003d39;
  color: #9db9b5;
  font: 14px/28px "Liberation Serif", "Noto Sans CJK SC", serif;
  text-align: center;
}
.ptab-active { background: #007f79; color: #7fbab4; }

.grid-wrap {
  flex: 1;
  min-height: 0;
  display: flex;
  border: 1px solid #1ff0e8;
  border-right-color: #bff;
  overflow: hidden;
}
.grid-scroll { width: 1628px; overflow: hidden; }
.grid {
  width: 1628px;
  table-layout: fixed;
  border-collapse: separate;
  border-spacing: 0;
  font: 15px "Liberation Serif", serif;
}
.c-idx { width: 48px; }
.c-data { width: 790px; }
.grid th {
  height: 35px;
  padding: 0 16px 3px 10px;
  text-align: left;
  background: #00312e;
  color: #fff;
  font-weight: 700;
  border-right: 1px solid #1ff0e8;
  border-bottom: 1px solid #1ff0e8;
}
.grid th:first-child { color: #f4f4f4; }
.th-in { display: flex; align-items: center; }
.sort { margin-left: 11px; fill: #b9c6c4; }
.chev { margin-left: auto; fill: none; stroke: #fff; stroke-width: 1.600; }
.grid td {
  height: 30px;
  padding: 0 11px;
  background: #004542;
  color: #b4d3cf;
  border-right: 1px solid #008e8a;
  border-bottom: 1px solid #008e8a;
}
.grid td:first-child { border-right-color: #00b0a8; }
.sb { flex: 1; display: flex; flex-direction: column; }
.sb-head { flex: none; height: 35px; background: #00433f; border-bottom: 1px solid #cfeeee; }
.sb-track { flex: 1; background: #00413d; }
.sb-thumb { height: 228px; border-radius: 7px; background: #5db0b3; }
```
